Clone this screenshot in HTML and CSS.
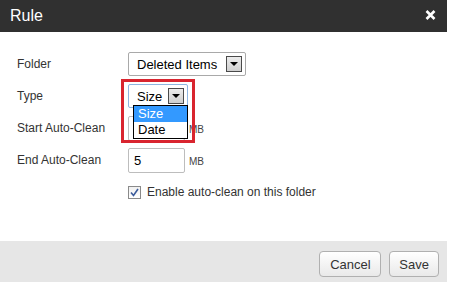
FILE: index.html
```html
<!DOCTYPE html>
<html lang="en">
<head>
  <meta charset="utf-8">
  <title>Rule</title>
  <link rel="stylesheet" href="styles.css">
</head>
<body>
  <div class="dialog">
    <div class="dialog-header">
      <span class="dialog-title">Rule</span>
      <span class="dialog-close">
        <svg width="11" height="10" viewBox="0 0 11 10"><path d="M1.5 1 L9.5 9 M9.5 1 L1.5 9" stroke="#fff" stroke-width="2.6" /></svg>
      </span>
    </div>

    <div class="dialog-body">
      <div class="form-row">
        <span class="form-label">Folder</span>
        <div class="select select-folder">
          <span class="select-value">Deleted Items</span>
          <span class="select-arrow"></span>
        </div>
      </div>

      <div class="form-row row-type">
        <span class="form-label">Type</span>
        <div class="select select-type">
          <span class="select-value">Size</span>
          <span class="select-arrow"></span>
        </div>
        <ul class="dropdown">
          <li class="active">Size</li>
          <li>Date</li>
        </ul>
        <div class="callout"></div>
      </div>

      <div class="form-row">
        <span class="form-label">Start Auto-Clean</span>
        <div class="text-input"></div>
        <span class="unit">MB</span>
      </div>

      <div class="form-row">
        <span class="form-label">End Auto-Clean</span>
        <div class="text-input">5</div>
        <span class="unit">MB</span>
      </div>

      <div class="form-row">
        <span class="form-label"></span>
        <label class="check">
          <span class="checkbox">
            <svg width="11" height="11" viewBox="0 0 11 11"><path d="M2 5.5 L4.5 8.5 L9 2" fill="none" stroke="#3b5b9b" stroke-width="1.6" /></svg>
          </span>
          Enable auto-clean on this folder
        </label>
      </div>
    </div>

    <div class="dialog-footer">
      <button class="btn btn-cancel">Cancel</button>
      <button class="btn">Save</button>
    </div>
  </div>
</body>
</html>
```

FILE: styles.css
```css
html, body {
  margin: 0;
  padding: 0;
  background: #fff;
  font-family: "Liberation Sans", Arial, sans-serif;
}

.dialog {
  width: 447px;
  height: 282px;
  display: flex;
  flex-direction: column;
  background: #fff;
}

.dialog-header {
  height: 32px;
  background: #303030;
  color: #fff;
  display: flex;
  align-items: center;
  justify-content: space-between;
  padding: 0 10px 0 10px;
}

.dialog-title {
  font-size: 16px;
  margin-top: -1px;
}

.dialog-close {
  display: flex;
  margin-top: -3px;
  margin-right: 1px;
}

.dialog-body {
  flex: 1;
  padding: 20px 0 0 17px;
  display: flex;
  flex-direction: column;
  gap: 8px;
}

.form-row {
  position: relative;
  height: 24px;
  display: flex;
  align-items: center;
}

.form-label {
  width: 111px;
  font-size: 12px;
  color: #333;
}

.select {
  height: 22px;
  border: 1px solid #a9a9a9;
  border-radius: 2px;
  background: #fff;
  display: flex;
  align-items: center;
  padding: 0 3px 0 8px;
  font-size: 13px;
  color: #000;
}

.select-folder {
  width: 105px;
  justify-content: space-between;
}

.select-type {
  width: 47px;
  justify-content: space-between;
  border-color: #8fb5e0;
}

.select-arrow {
  width: 14px;
  height: 14px;
  border: 1px solid #4a4a4a;
  background: linear-gradient(#ececec, #cfcfcf);
  position: relative;
}

.select-arrow::after {
  content: "";
  position: absolute;
  left: 3px;
  top: 5px;
  border-left: 4px solid transparent;
  border-right: 4px solid transparent;
  border-top: 4px solid #000;
}

.dropdown {
  position: absolute;
  left: 116px;
  top: 21px;
  width: 53px;
  margin: 0;
  padding: 0;
  list-style: none;
  border: 1px solid #000;
  background: #fff;
  font-size: 13px;
  z-index: 2;
}

.dropdown li {
  height: 16px;
  line-height: 16px;
  padding-left: 4px;
  color: #000;
}

.dropdown li.active {
  background: #3399ff;
  color: #fff;
}

.callout {
  position: absolute;
  left: 104px;
  top: -5px;
  width: 68px;
  height: 58px;
  border: 3px solid #d9252f;
  z-index: 3;
}

.text-input {
  width: 50px;
  height: 23px;
  border: 1px solid #bdbdbd;
  border-radius: 2px;
  padding: 0 0 0 5px;
  font-size: 13px;
  line-height: 23px;
  color: #000;
}

.unit {
  margin-left: 4px;
  margin-top: 2px;
  font-size: 10px;
  color: #444;
}

.check {
  display: flex;
  align-items: center;
  gap: 6px;
  font-size: 12px;
  color: #333;
}

.checkbox {
  width: 11px;
  height: 11px;
  border: 1px solid #8a8a8a;
  background: linear-gradient(#f0f0f0, #ffffff);
  display: flex;
}

.dialog-footer {
  height: 41px;
  background: #e6e6e6;
  display: flex;
  justify-content: flex-end;
  align-items: flex-start;
  gap: 8px;
  padding: 10px 8px 0 0;
  box-sizing: border-box;
}

.btn {
  height: 26px;
  padding: 0 9px;
  border: 1px solid #b0b0b0;
  border-radius: 4px;
  background: linear-gradient(#ffffff, #e9e9e9);
  font-family: "Liberation Sans", Arial, sans-serif;
  font-size: 13px;
  color: #333;
}

.btn-cancel {
  min-width: 62px;
}
```
